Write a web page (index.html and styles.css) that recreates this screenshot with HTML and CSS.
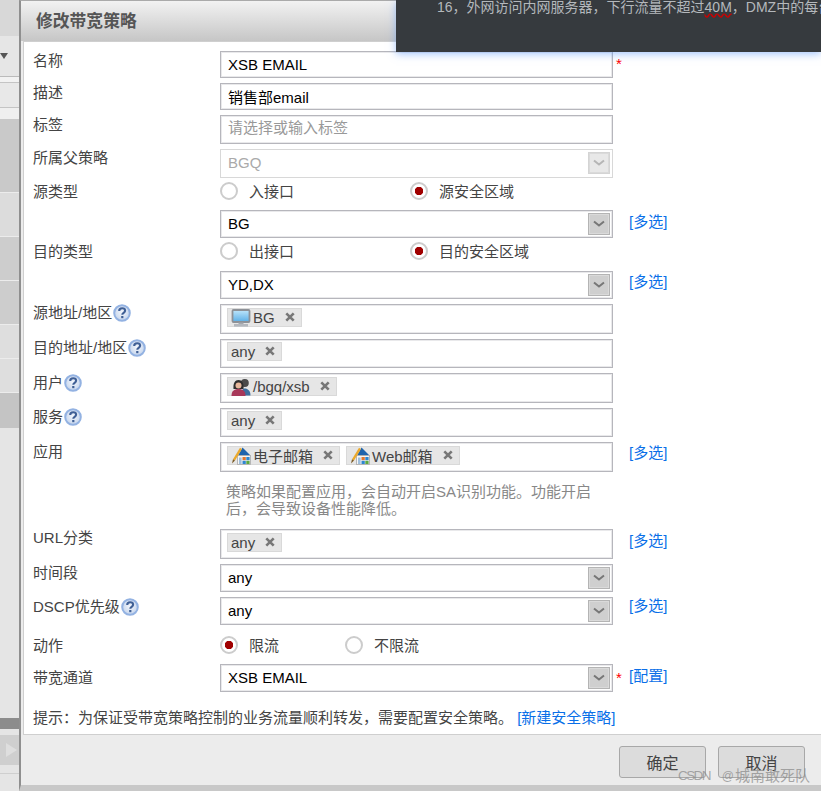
FILE: index.html
```html
<!DOCTYPE html>
<html lang="zh-CN">
  <head>
    <meta charset="UTF-8" />
    <title>修改带宽策略</title>
    <link rel="stylesheet" href="styles.css">
  </head>
  <body>
    <svg class="defs" width="0" height="0">
      <defs>
        <radialGradient id="helpFill" cx="50%" cy="45%" r="55%">
          <stop offset="0" stop-color="#f4f7fc"/>
          <stop offset="1" stop-color="#c4d4ec"/>
        </radialGradient>
        <linearGradient id="screenFill" x1="0" y1="0" x2="0" y2="1">
          <stop offset="0" stop-color="#bfe6fb"/>
          <stop offset="1" stop-color="#5aaee6"/>
        </linearGradient>
      </defs>
      <symbol id="help" viewBox="0 0 18 18">
        <circle cx="9" cy="9" r="7.800" fill="url(#helpFill)" stroke="#93b2e2" stroke-width="2"/>
        <path d="M6.200 7c0-1.700 1.300-2.700 3-2.700s2.900 1 2.900 2.400c0 2.200-2.800 2.100-2.800 4.100" fill="none" stroke="#3f5f95" stroke-width="2.100"/>
        <rect x="8.200" y="12" width="2.200" height="2.200" fill="#3f5f95"/>
      </symbol>
      <symbol id="app" viewBox="0 0 20 18">
        <path d="M11.500 0.500 19.500 8.500H7z" fill="#1f64ad"/>
        <rect x="6.500" y="8.500" width="13" height="9" fill="#f6f6f6" stroke="#a8a8a8" stroke-width=".8"/>
        <rect x="11.500" y="10" width="3.300" height="3.200" fill="#e2772e"/>
        <rect x="15.300" y="10" width="3.300" height="3.200" fill="#2f86cf"/>
        <rect x="11.500" y="13.800" width="3.300" height="3.200" fill="#2f86cf"/>
        <rect x="15.300" y="13.800" width="3.300" height="3.200" fill="#5da840"/>
        <rect x="8" y="10.500" width="2.600" height="6.500" fill="#9fbfdc"/>
        <path d="M9 0.800 11 2 4 13.500 2 12.300z" fill="#eba92c"/>
        <path d="M2 12.300 4 13.500 1 16.500z" fill="#7a5a24"/>
      </symbol>
      <symbol id="close" viewBox="0 0 10 10">
        <path d="M1.300 1.300l7.400 7.400M8.700 1.300l-7.400 7.400" stroke="#777" stroke-width="2.600"/>
      </symbol>
      <symbol id="chevron" viewBox="0 0 12 8">
        <path d="M1 1.500l5 4 5-4" fill="none" stroke="currentColor" stroke-width="2"/>
      </symbol>
    </svg>

    <div class="sidebar">
      <div class="band b-top"></div>
      <div class="band b-arrow"><span class="drop"></span></div>
      <div class="band b-line"></div>
      <div class="band b-light"></div>
      <div class="band b-line2"></div>
      <div class="band b-dark" style="height:73px"></div>
      <div class="band b-mid" style="height:44px"></div>
      <div class="band b-dark2" style="height:44px"></div>
      <div class="band b-dark2" style="height:44px"></div>
      <div class="band b-mid2" style="height:34px"></div>
      <div class="band b-mid2" style="height:35px"></div>
      <div class="band b-darker" style="height:35px"></div>
      <div class="band b-rest" style="height:290px"></div>
      <div class="band b-bar"></div>
      <div class="band b-rest" style="height:6px"></div>
      <div class="band b-pager"><span class="play"></span></div>
      <div class="band b-end"></div>
    </div>

    <div class="dialog">
      <div class="dialog-title">修改带宽策略</div>
      <form class="dialog-body">
        <div class="row">
          <label class="row-label">名称</label>
          <input class="field h27" type="text" value="XSB EMAIL" />
          <span class="star">*</span>
        </div>
        <div class="row">
          <label class="row-label">描述</label>
          <input class="field h27" type="text" value="销售部email" />
        </div>
        <div class="row">
          <label class="row-label">标签</label>
          <input class="field h29 tag-input" type="text" placeholder="请选择或输入标签" />
        </div>
        <div class="row">
          <label class="row-label up">所属父策略</label>
          <div class="field h29 select disabled">BGQ<span class="arrow"><svg><use href="#chevron"/></svg></span></div>
        </div>
        <div class="row row-radio">
          <label class="row-label">源类型</label>
          <span class="radio wide"><i></i>入接口</span>
          <span class="radio on"><i></i>源安全区域</span>
        </div>
        <div class="row">
          <span class="row-label"></span>
          <div class="field h28 select">BG<span class="arrow"><svg><use href="#chevron"/></svg></span></div>
          <a class="more">[多选]</a>
        </div>
        <div class="row row-radio gap11">
          <label class="row-label">目的类型</label>
          <span class="radio wide"><i></i>出接口</span>
          <span class="radio on"><i></i>目的安全区域</span>
        </div>
        <div class="row">
          <span class="row-label"></span>
          <div class="field h28 select">YD,DX<span class="arrow"><svg><use href="#chevron"/></svg></span></div>
          <a class="more up">[多选]</a>
        </div>
        <div class="row">
          <label class="row-label up">源地址/地区<svg class="help"><use href="#help"/></svg></label>
          <div class="field h30 tags">
            <span class="chip">
              <svg class="chip-icon" viewBox="0 0 20 18">
                <rect x="1.500" y="1" width="17" height="12" rx="1" fill="url(#screenFill)" stroke="#8d9197" stroke-width="1.800"/>
                <rect x="7.500" y="13.500" width="5" height="2" fill="#a4a8ae"/>
                <rect x="3" y="15" width="14" height="2.600" fill="#b4b8be"/>
              </svg>BG<svg class="x"><use href="#close"/></svg>
            </span>
          </div>
        </div>
        <div class="row">
          <label class="row-label up">目的地址/地区<svg class="help"><use href="#help"/></svg></label>
          <div class="field h29 tags tags-up"><span class="chip">any<svg class="x"><use href="#close"/></svg></span></div>
        </div>
        <div class="row">
          <label class="row-label">用户<svg class="help"><use href="#help"/></svg></label>
          <div class="field h30 tags">
            <span class="chip">
              <svg class="chip-icon" viewBox="0 0 20 18">
                <circle cx="13.800" cy="5" r="4" fill="#4a4a4a"/>
                <path d="M10 17.500c0-5 1.500-7 4-7s5.500 2 5.500 7z" fill="#3f6f9f"/>
                <path d="M2.500 11c-.5-6 1.500-9 5-9s5.500 3 5 9z" fill="#2e2e2e"/>
                <circle cx="7.500" cy="7.500" r="3" fill="#e8b89c"/>
                <path d="M.5 18c0-5 2.500-7 7-7s7 2 7 7z" fill="#a8385a"/>
              </svg>/bgq/xsb<svg class="x"><use href="#close"/></svg>
            </span>
          </div>
        </div>
        <div class="row">
          <label class="row-label up">服务<svg class="help"><use href="#help"/></svg></label>
          <div class="field h29 tags tags-up"><span class="chip">any<svg class="x"><use href="#close"/></svg></span></div>
        </div>
        <div class="row row-app">
          <label class="row-label">应用</label>
          <div class="field h30 tags">
            <span class="chip"><svg class="chip-icon"><use href="#app"/></svg>电子邮箱<svg class="x"><use href="#close"/></svg></span>
            <span class="chip"><svg class="chip-icon"><use href="#app"/></svg>Web邮箱<svg class="x"><use href="#close"/></svg></span>
          </div>
          <a class="more up">[多选]</a>
        </div>
        <p class="app-note">策略如果配置应用，会自动开启SA识别功能。功能开启<br>后，会导致设备性能降低。</p>
        <div class="row">
          <label class="row-label up">URL分类</label>
          <div class="field h30 tags"><span class="chip">any<svg class="x"><use href="#close"/></svg></span></div>
          <a class="more">[多选]</a>
        </div>
        <div class="row">
          <label class="row-label up">时间段</label>
          <div class="field h28 select">any<span class="arrow"><svg><use href="#chevron"/></svg></span></div>
        </div>
        <div class="row row-dscp">
          <label class="row-label">DSCP优先级<svg class="help"><use href="#help"/></svg></label>
          <div class="field h28 select">any<span class="arrow"><svg><use href="#chevron"/></svg></span></div>
          <a class="more">[多选]</a>
        </div>
        <div class="row row-radio row-action">
          <label class="row-label">动作</label>
          <span class="radio short on"><i></i>限流</span>
          <span class="radio"><i></i>不限流</span>
        </div>
        <div class="row row-bw">
          <label class="row-label">带宽通道</label>
          <div class="field h28 select">XSB EMAIL<span class="arrow"><svg><use href="#chevron"/></svg></span></div>
          <span class="star">*</span>
          <a class="more">[配置]</a>
        </div>
        <p class="hint">提示：为保证受带宽策略控制的业务流量顺利转发，需要配置安全策略。 <a>[新建安全策略]</a></p>
      </form>
      <div class="dialog-foot">
        <button type="button">确定</button>
        <button type="button">取消</button>
      </div>
    </div>

    <div class="overlay">16，外网访问内网服务器，下行流量不超过<span class="typo">40M</span>，DMZ中的每台</div>
    <div class="watermark"><span class="wm-brand">CSDN</span><span class="wm-at">@</span>城南敢死队</div>
  </body>
</html>
```

FILE: styles.css
```css
* {
  margin: 0;
  padding: 0;
  box-sizing: border-box;
}
body {
  font-family: "Liberation Sans", "Noto Sans CJK SC", sans-serif;
  font-size: 15px;
  color: #444;
  width: 821px;
  height: 791px;
  overflow: hidden;
  display: flex;
  position: relative;
  background: #e5e5e5;
}
.defs {
  position: absolute;
}

/* page behind the dialog */
.sidebar {
  width: 19px;
  flex: none;
  display: flex;
  flex-direction: column;
}
.band {
  border-bottom: 1px solid #ececec;
}
.b-top {
  height: 36px;
  background: #d8d8d8;
  border: 0;
}
.b-arrow {
  height: 41px;
  background: #e6e6e6;
  position: relative;
  border-bottom: 1px solid #bbb;
}
.drop {
  position: absolute;
  left: 0;
  top: 17px;
  border-left: 4px solid transparent;
  border-right: 4px solid transparent;
  border-top: 6px solid #555;
}
.b-line {
  height: 5px;
  background: #f2f2f2;
  border-bottom: 0;
}
.b-light {
  height: 26px;
  background: #e8e8e8;
  border-top: 1px solid #c4c4c4;
  border-bottom: 1px solid #c4c4c4;
}
.b-line2 {
  height: 12px;
  background: #efefef;
  border-bottom: 1px solid #c8c8c8;
}
.b-dark {
  background: #c9c9c9;
}
.b-mid {
  background: #dcdcdc;
}
.b-dark2 {
  background: #cdcdcd;
}
.b-mid2 {
  background: #dedede;
}
.b-darker {
  background: #c4c4c4;
  border: 0;
}
.b-rest {
  background: #e5e5e5;
  border: 0;
}
.b-bar {
  height: 11px;
  background: #8c8c8c;
  border: 0;
}
.b-pager {
  height: 30px;
  background: #cfcfcf;
  border: 0;
  position: relative;
}
.play {
  position: absolute;
  left: 6px;
  top: 8px;
  border-top: 7px solid transparent;
  border-bottom: 7px solid transparent;
  border-left: 11px solid #dedede;
}
.b-end {
  height: 26px;
  background: #e5e5e5;
  border-top: 8px solid #e5e5e5;
  border-bottom: 0;
  box-shadow: inset 0 1px 0 #cfcfcf;
}

/* dialog */
.dialog {
  flex: 1;
  min-width: 0;
  height: 791px;
  display: flex;
  flex-direction: column;
  background: #ececec;
  border-left: 2px solid #8f8f8f;
  border-top: 1px solid #aaa;
  border-bottom: 6px solid #c8c8c8;
}
.dialog-title {
  height: 40px;
  padding: 11px 0 0 15px;
  flex: none;
  font-size: 16.8px;
  font-weight: bold;
  line-height: 20px;
  color: #555;
  background: linear-gradient(#f2f2f2, #c6c6c6);
}
.dialog-body {
  height: 694px;
  flex: none;
  margin-left: 2px;
  padding: 9px 0 0 9px;
  background: #fff;
  border-left: 1px solid #cfcfcf;
  border-top: 1px solid #cfcfcf;
  border-bottom: 1px solid #cfcfcf;
}
.dialog-foot {
  display: flex;
  justify-content: flex-end;
  gap: 12px;
  padding: 11px 16px 0 0;
}
.dialog-foot button {
  width: 87px;
  height: 32px;
  font-family: inherit;
  font-size: 16px;
  color: #444;
  background: #dcdcdc;
  border: 1px solid #a8a8a8;
  border-radius: 3px;
}

/* form rows */
.row {
  display: flex;
  align-items: flex-start;
  margin-bottom: 5px;
}
.row-label {
  width: 187px;
  flex: none;
  display: flex;
  align-items: center;
  line-height: 20px;
  height: 20px;
}
.row-label.up {
  margin-top: -1px;
}
.help {
  width: 18px;
  height: 18px;
  margin-left: 1px;
  flex: none;
}
.field {
  width: 393px;
  flex: none;
  border: 1px solid #b6b6bc;
  box-shadow: inset 0 0 0 1px rgba(182, 182, 188, 0.3);
  background: #fff;
  font: inherit;
  color: #000;
  padding-left: 7px;
  outline: none;
}
.h27 {
  height: 27px;
}
.h28 {
  height: 28px;
}
.h29 {
  height: 29px;
}
.h30 {
  height: 30px;
}
.tag-input {
  padding-bottom: 5px;
}
.tag-input::placeholder {
  color: #999;
}
.star {
  width: 13px;
  margin: 3px 0 0 3px;
  color: #f00;
  line-height: 20px;
}
.more {
  margin: 2px 0 0 16px;
  color: #0a6fe8;
  line-height: 20px;
  cursor: pointer;
}
.more.up {
  margin-top: 1px;
}
.star + .more {
  margin-left: 0;
}

/* fake select */
.select {
  position: relative;
  line-height: 26px;
}
.arrow {
  position: absolute;
  right: 2px;
  top: 2px;
  width: 22px;
  height: 22px;
  display: flex;
  align-items: center;
  justify-content: center;
  color: #777;
  background: #cfcfcf;
  border: 1px solid #b4b4b4;
  box-shadow: inset 0 0 0 1px #dadada;
}
.arrow svg {
  width: 12px;
  height: 8px;
}
.select.disabled {
  color: #aaa;
  border-color: #d8d8d8;
  box-shadow: none;
}
.select.disabled .arrow {
  color: #b5b5b5;
  background: #e8e8e8;
  border-color: #d4d4d4;
}

/* radios */
.row-radio {
  height: 17px;
  margin-bottom: 10px;
  align-items: center;
}
.row-radio.gap11 {
  margin-bottom: 11px;
}
.row-action {
  margin: 12px 0 10px;
}
.radio {
  display: flex;
  align-items: center;
  gap: 11px;
  margin-top: -2px;
}
.radio.wide {
  width: 190px;
}
.radio.short {
  width: 125px;
}
.radio i {
  width: 18px;
  height: 18px;
  border-radius: 50%;
  border: 2px solid #ccc;
  background: #fff;
  flex: none;
}
.radio.on i {
  background: radial-gradient(circle, #a00000 0 4px, #fff 4.500px);
}

/* tag chips */
.tags {
  display: flex;
  align-items: flex-start;
  gap: 6px;
  padding: 3px 0 0 6px;
}
.tags-up {
  padding-top: 2px;
}
.chip {
  display: flex;
  align-items: center;
  height: 19px;
  padding: 0 6px 0 3px;
  background: #e6e6e6;
  border: 1px solid #d9d9d9;
  color: #444;
}
.chip-icon {
  width: 20px;
  height: 18px;
  margin-right: 2px;
  flex: none;
}
.x {
  width: 10px;
  height: 10px;
  margin: -1px 0 0 10px;
  flex: none;
}
.app-note {
  width: 393px;
  margin: 11px 0 12px 193px;
  line-height: 17px;
  color: #888;
}
.row-dscp .more {
  margin-top: -1px;
}
.row-bw {
  margin-bottom: 16px;
}
.row-bw .row-label {
  margin-top: 4px;
}
.row-bw .star {
  margin-top: 4px;
}
.hint {
  line-height: 20px;
}
.hint a {
  color: #0a6fe8;
  cursor: pointer;
}

/* pieces lying over the page */
.overlay {
  position: absolute;
  left: 396px;
  top: 0;
  right: 0;
  height: 52px;
  padding-left: 41px;
  background: #363a3e;
  color: #b4b8bc;
  font-size: 14px;
  line-height: 14px;
  white-space: nowrap;
  overflow: hidden;
  box-shadow: 0 2px 8px rgba(90, 150, 250, 0.55);
}
.typo {
  text-decoration: underline wavy #c00;
}
.watermark {
  position: absolute;
  left: 678px;
  top: 766px;
  display: flex;
  align-items: center;
  line-height: 20px;
  color: rgba(140, 140, 140, 0.75);
  white-space: nowrap;
}
.wm-brand {
  font-size: 13.500px;
  letter-spacing: -1.600px;
  margin-right: 12px;
}
.wm-at {
  font-size: 12px;
  margin-right: 1px;
}
```
